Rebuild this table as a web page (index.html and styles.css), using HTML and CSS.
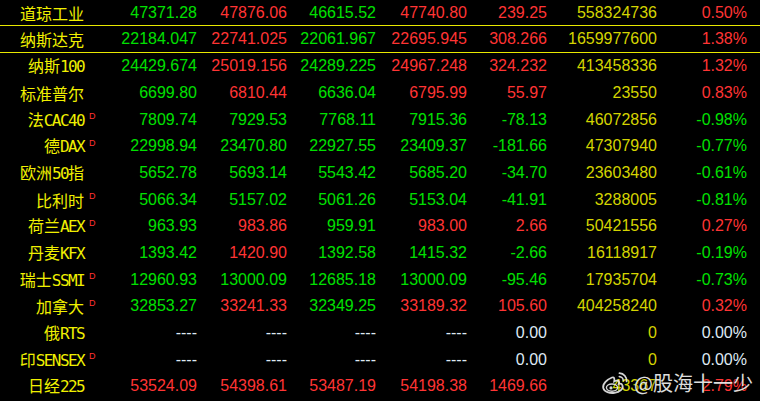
FILE: index.html
```html
<!DOCTYPE html>
<html lang="zh">
<head>
<meta charset="utf-8">
<title>全球指数</title>
<link rel="stylesheet" href="styles.css">
</head>
<body>
<div class="board">
  <div class="row first"><span class="name">道琼工业</span><span class="mk"></span><span class="g">47371.28</span><span class="r">47876.06</span><span class="g">46615.52</span><span class="r">47740.80</span><span class="r">239.25</span><span class="y">558324736</span><span class="r">0.50%</span></div>
  <div class="row sel"><span class="name">纳斯达克</span><span class="mk"></span><span class="g">22184.047</span><span class="r">22741.025</span><span class="g">22061.967</span><span class="r">22695.945</span><span class="r">308.266</span><span class="y">1659977600</span><span class="r">1.38%</span></div>
  <div class="row"><span class="name">纳斯<span class="lat">100</span></span><span class="mk"></span><span class="g">24429.674</span><span class="r">25019.156</span><span class="g">24289.225</span><span class="r">24967.248</span><span class="r">324.232</span><span class="y">413458336</span><span class="r">1.32%</span></div>
  <div class="row"><span class="name">标准普尔</span><span class="mk"></span><span class="g">6699.80</span><span class="r">6810.44</span><span class="g">6636.04</span><span class="r">6795.99</span><span class="r">55.97</span><span class="y">23550</span><span class="r">0.83%</span></div>
  <div class="row"><span class="name">法<span class="lat">CAC40</span></span><span class="mk">D</span><span class="g">7809.74</span><span class="g">7929.53</span><span class="g">7768.11</span><span class="g">7915.36</span><span class="g">-78.13</span><span class="y">46072856</span><span class="g">-0.98%</span></div>
  <div class="row"><span class="name">德<span class="lat">DAX</span></span><span class="mk">D</span><span class="g">22998.94</span><span class="g">23470.80</span><span class="g">22927.55</span><span class="g">23409.37</span><span class="g">-181.66</span><span class="y">47307940</span><span class="g">-0.77%</span></div>
  <div class="row"><span class="name">欧洲<span class="lat">50</span>指</span><span class="mk"></span><span class="g">5652.78</span><span class="g">5693.14</span><span class="g">5543.42</span><span class="g">5685.20</span><span class="g">-34.70</span><span class="y">23603480</span><span class="g">-0.61%</span></div>
  <div class="row"><span class="name">比利时</span><span class="mk">D</span><span class="g">5066.34</span><span class="g">5157.02</span><span class="g">5061.26</span><span class="g">5153.04</span><span class="g">-41.91</span><span class="y">3288005</span><span class="g">-0.81%</span></div>
  <div class="row"><span class="name">荷兰<span class="lat">AEX</span></span><span class="mk">D</span><span class="g">963.93</span><span class="r">983.86</span><span class="g">959.91</span><span class="r">983.00</span><span class="r">2.66</span><span class="y">50421556</span><span class="r">0.27%</span></div>
  <div class="row"><span class="name">丹麦<span class="lat">KFX</span></span><span class="mk"></span><span class="g">1393.42</span><span class="r">1420.90</span><span class="g">1392.58</span><span class="g">1415.32</span><span class="g">-2.66</span><span class="y">16118917</span><span class="g">-0.19%</span></div>
  <div class="row"><span class="name">瑞士<span class="lat">SSMI</span></span><span class="mk">D</span><span class="g">12960.93</span><span class="g">13000.09</span><span class="g">12685.18</span><span class="g">13000.09</span><span class="g">-95.46</span><span class="y">17935704</span><span class="g">-0.73%</span></div>
  <div class="row"><span class="name">加拿大</span><span class="mk">D</span><span class="g">32853.27</span><span class="r">33241.33</span><span class="g">32349.25</span><span class="r">33189.32</span><span class="r">105.60</span><span class="y">404258240</span><span class="r">0.32%</span></div>
  <div class="row"><span class="name">俄<span class="lat">RTS</span></span><span class="mk"></span><span class="w">----</span><span class="w">----</span><span class="w">----</span><span class="w">----</span><span class="w">0.00</span><span class="y">0</span><span class="w">0.00%</span></div>
  <div class="row"><span class="name">印<span class="lat">SENSEX</span></span><span class="mk">D</span><span class="w">----</span><span class="w">----</span><span class="w">----</span><span class="w">----</span><span class="w">0.00</span><span class="y">0</span><span class="w">0.00%</span></div>
  <div class="row"><span class="name">日经<span class="lat">225</span></span><span class="mk"></span><span class="r">53524.09</span><span class="r">54398.61</span><span class="r">53487.19</span><span class="r">54198.38</span><span class="r">1469.66</span><span class="y">43367</span><span class="r">2.79%</span></div>

  <div class="watermark">
    <svg class="weibo" width="28" height="24" viewBox="0 0 28 24" aria-hidden="true">
      <path d="M11 6.5 C6 8.5 1.5 13 2.2 16.8 C3 21 9 22.5 13.5 21.8 C19 21 22.5 17.8 21.5 14.5 C20.9 12.6 18.8 12.6 17.8 12.8 C18.6 10.5 17.8 9.2 15.6 9.6 C14.2 9.9 13.2 10.4 13.2 10.4 C13.8 7.8 13.2 5.7 11 6.5 Z" fill="none" stroke="#e6e6e6" stroke-width="1.8"/>
      <ellipse cx="11" cy="16.6" rx="5.6" ry="3.6" fill="none" stroke="#e6e6e6" stroke-width="1.4"/>
      <circle cx="10" cy="16.9" r="1.6" fill="#e6e6e6"/>
      <path d="M18.5 2.2 A7.5 7.5 0 0 1 25.6 10.4" fill="none" stroke="#e6e6e6" stroke-width="1.8" stroke-linecap="round"/>
      <path d="M18.3 5.6 A4 4 0 0 1 22.2 9.6" fill="none" stroke="#e6e6e6" stroke-width="1.6" stroke-linecap="round"/>
    </svg>
    <span class="wm-text">@股海十一少</span>
  </div>
</div>
</body>
</html>
```

FILE: styles.css
```css
html, body {
  margin: 0;
  padding: 0;
  background: #000;
}

body {
  width: 760px;
  height: 401px;
  overflow: hidden;
  font-family: "Liberation Sans", Arial, "Noto Sans CJK SC", sans-serif;
  font-size: 16px;
}

.board {
  position: relative;
  width: 760px;
  height: 401px;
}

.row {
  display: grid;
  grid-template-columns: 84px 16px 97px 90px 89px 91px 80px 110px 90px 13px;
  align-items: center;
  height: 26.67px;
  box-sizing: border-box;
  white-space: nowrap;
}

.row.first {
  height: 25px;
}

.row.sel {
  height: 28px;
  border-top: 1px solid #e8e800;
  border-bottom: 1px solid #e8e800;
}

.row > span {
  text-align: right;
  line-height: 20px;
}

.name {
  font-family: "Noto Sans CJK SC", sans-serif;
  color: #f0f000;
  font-size: 16px;
}

.lat {
  font-family: "DejaVu Sans Mono", monospace;
  font-size: 16px;
  letter-spacing: -1.6px;
}

.mk {
  align-self: start;
  text-align: left !important;
  padding-left: 5px;
  padding-top: 5px;
  color: #ff3030;
  font-family: "Liberation Sans", sans-serif;
  font-size: 9px;
  line-height: 10px !important;
}

.g { color: #00e000; }
.r { color: #ff3434; }
.y { color: #d4d400; }
.w { color: #dfe9f4; }

.watermark {
  position: absolute;
  left: 601px;
  top: 370px;
  display: flex;
  align-items: center;
  gap: 5px;
  opacity: 0.92;
}

.wm-text {
  font-family: "Noto Sans CJK SC", sans-serif;
  font-size: 20px;
  line-height: 26px;
  color: #f0f0f0;
  text-shadow: 0 0 2px rgba(0, 0, 0, 0.8);
}
```
